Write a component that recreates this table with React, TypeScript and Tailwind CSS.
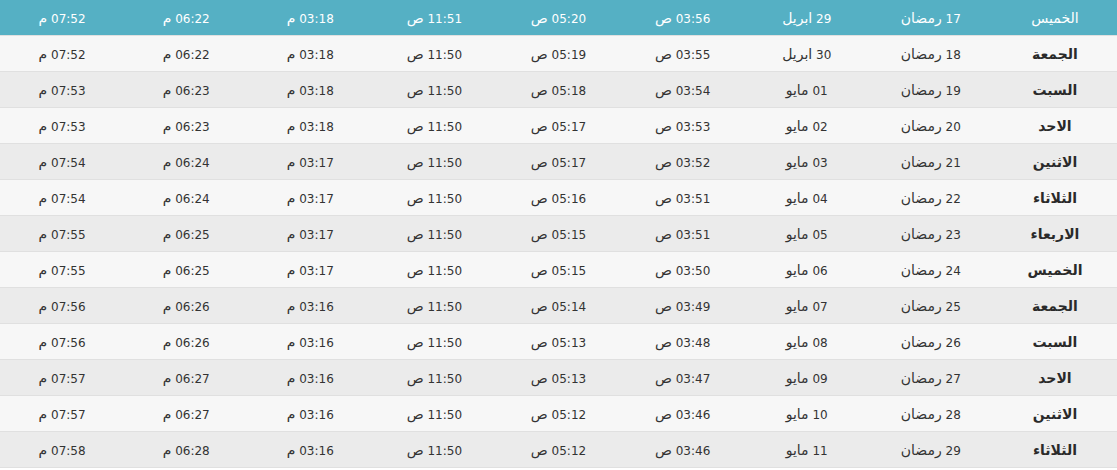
const rows: string[][] = [
  ['الخميس', '17 رمضان', '29 ابريل', '03:56 ص', '05:20 ص', '11:51 ص', '03:18 م', '06:22 م', '07:52 م'],
  ['الجمعة', '18 رمضان', '30 ابريل', '03:55 ص', '05:19 ص', '11:50 ص', '03:18 م', '06:22 م', '07:52 م'],
  ['السبت', '19 رمضان', '01 مايو', '03:54 ص', '05:18 ص', '11:50 ص', '03:18 م', '06:23 م', '07:53 م'],
  ['الاحد', '20 رمضان', '02 مايو', '03:53 ص', '05:17 ص', '11:50 ص', '03:18 م', '06:23 م', '07:53 م'],
  ['الاثنين', '21 رمضان', '03 مايو', '03:52 ص', '05:17 ص', '11:50 ص', '03:17 م', '06:24 م', '07:54 م'],
  ['الثلاثاء', '22 رمضان', '04 مايو', '03:51 ص', '05:16 ص', '11:50 ص', '03:17 م', '06:24 م', '07:54 م'],
  ['الاربعاء', '23 رمضان', '05 مايو', '03:51 ص', '05:15 ص', '11:50 ص', '03:17 م', '06:25 م', '07:55 م'],
  ['الخميس', '24 رمضان', '06 مايو', '03:50 ص', '05:15 ص', '11:50 ص', '03:17 م', '06:25 م', '07:55 م'],
  ['الجمعة', '25 رمضان', '07 مايو', '03:49 ص', '05:14 ص', '11:50 ص', '03:16 م', '06:26 م', '07:56 م'],
  ['السبت', '26 رمضان', '08 مايو', '03:48 ص', '05:13 ص', '11:50 ص', '03:16 م', '06:26 م', '07:56 م'],
  ['الاحد', '27 رمضان', '09 مايو', '03:47 ص', '05:13 ص', '11:50 ص', '03:16 م', '06:27 م', '07:57 م'],
  ['الاثنين', '28 رمضان', '10 مايو', '03:46 ص', '05:12 ص', '11:50 ص', '03:16 م', '06:27 م', '07:57 م'],
  ['الثلاثاء', '29 رمضان', '11 مايو', '03:46 ص', '05:12 ص', '11:50 ص', '03:16 م', '06:28 م', '07:58 م'],
]

// number part stays small, the arabic word gets a bigger size like the reference
function Cell({ text }: { text: string }) {
  const [num, word] = text.split(' ')
  return (
    <span>
      {num} <span className="text-[14px]">{word}</span>
    </span>
  )
}

export default function App() {
  return (
    <div dir="rtl" className="w-[1117px] h-[470px] bg-white" style={{ fontFamily: '"DejaVu Sans", Tahoma, sans-serif' }}>
      {rows.map((row, i) => {
        const today = i === 0
        const bg = today ? 'bg-[#55b0c4] text-white' : i % 2 === 1 ? 'bg-[#f7f7f7] text-[#333]' : 'bg-[#ebebeb] text-[#333]'
        return (
          <div key={i} className={`grid grid-cols-9 h-[36px] items-center border-b border-[#e0e0e0] text-[12px] leading-none ${bg}`}>
            {row.map((cell, j) => (
              <div key={j} className="text-center">
                {j === 0 ? (
                  <span className={`text-[14px] ${today ? '' : 'font-bold text-[#2a2a2a]'}`}>{cell}</span>
                ) : (
                  <Cell text={cell} />
                )}
              </div>
            ))}
          </div>
        )
      })}
    </div>
  )
}
